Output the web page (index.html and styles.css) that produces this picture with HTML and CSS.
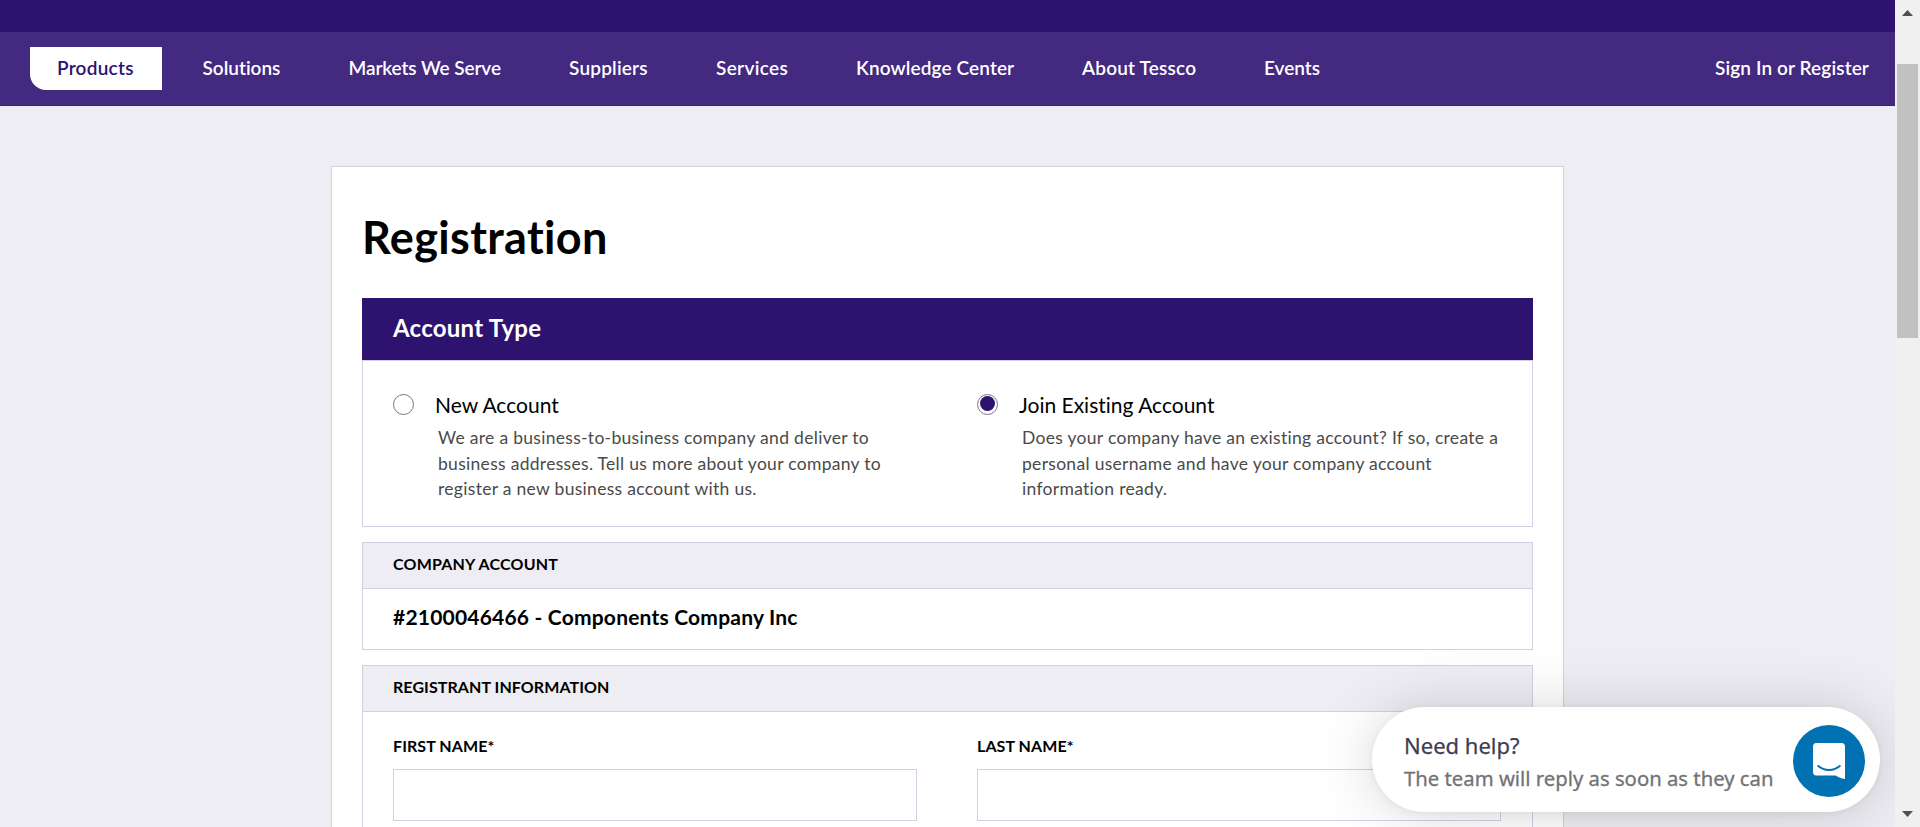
FILE: index.html
```html
<!DOCTYPE html>
<html lang="en">
<head>
<meta charset="utf-8">
<title>Registration</title>
<link rel="stylesheet" href="styles.css">
</head>
<body>
<div class="window">
  <div class="page">
    <div class="topbar"></div>
    <nav class="nav">
      <a class="nav-item active"><span class="nav-label t-products">Products</span></a>
      <a class="nav-item"><span class="nav-label t-solutions">Solutions</span></a>
      <a class="nav-item"><span class="nav-label t-markets">Markets We Serve</span></a>
      <a class="nav-item"><span class="nav-label t-suppliers">Suppliers</span></a>
      <a class="nav-item"><span class="nav-label t-services">Services</span></a>
      <a class="nav-item"><span class="nav-label t-knowledge">Knowledge Center</span></a>
      <a class="nav-item"><span class="nav-label t-about">About Tessco</span></a>
      <a class="nav-item"><span class="nav-label t-events">Events</span></a>
      <a class="signin">Sign In or Register</a>
    </nav>
    <main class="card">
      <h1 class="title">Registration</h1>
      <section class="panel">
        <h2 class="panel-banner">Account Type</h2>
        <div class="columns options">
          <div class="option">
            <span class="radio"></span>
            <div class="option-text">
              <div class="option-title">New Account</div>
              <p class="option-desc">We are a business-to-business company and deliver to<br>business addresses. Tell us more about your company to<br>register a new business account with us.</p>
            </div>
          </div>
          <div class="option">
            <span class="radio checked"></span>
            <div class="option-text">
              <div class="option-title">Join Existing Account</div>
              <p class="option-desc">Does your company have an existing account? If so, create a<br>personal username and have your company account<br>information ready.</p>
            </div>
          </div>
        </div>
      </section>
      <section class="panel">
        <h3 class="panel-head t-company">COMPANY ACCOUNT</h3>
        <div class="company">#2100046466 - Components Company Inc</div>
      </section>
      <section class="panel">
        <h3 class="panel-head">REGISTRANT INFORMATION</h3>
        <div class="columns fields">
          <label class="field"><span class="label">FIRST NAME*</span><input class="input" type="text"></label>
          <label class="field"><span class="label">LAST NAME*</span><input class="input" type="text"></label>
        </div>
      </section>
    </main>
  </div>
  <div class="scrollbar">
    <svg class="arrow" viewBox="0 0 11 6"><path d="M0 6 5.5 0 11 6Z"/></svg>
    <div class="thumb"></div>
    <svg class="arrow arrow-down" viewBox="0 0 11 6"><path d="M0 0 5.5 6 11 0Z"/></svg>
  </div>
  <aside class="help">
    <div class="help-text">
      <div class="help-title">Need help?</div>
      <div class="help-sub">The team will reply as soon as they can</div>
    </div>
    <div class="help-button">
      <svg class="help-icon" viewBox="0 0 32 36"><path fill="#fff" d="M3.5 0h25A3.5 3.5 0 0 1 32 3.5V36c-3.500-.6-6.500-2-9.500-3.600h-19A3.500 3.500 0 0 1 0 28.900V3.500A3.500 3.500 0 0 1 3.500 0Z"/><path fill="none" stroke="#0071b2" stroke-width="2" stroke-linecap="round" d="M5.200 23c6 5.200 15.600 5.200 21.600 0"/></svg>
    </div>
  </aside>
</div>
</body>
</html>
```
FILE: styles.css
```css
* { box-sizing: border-box; }
body { margin: 0; font-family: Lato, "Open Sans", sans-serif; font-variant-ligatures: none; color: #000; overflow: hidden; }
h1, h2, h3, p { margin: 0; }
.window { display: flex; height: 827px; position: relative; overflow: hidden; }
.page { flex: 1; background: #eeedf3; overflow: hidden; }
.topbar { height: 32px; background: #2d1270; }
.nav { height: 74px; background: #43297f; border-bottom: 1px solid #3a2178; display: flex; align-items: flex-start; padding: 15px 26px 0 30px; }
.nav-item { height: 43px; line-height: 41px; padding: 0 27px; margin-right: 14px; font-size: 19px; font-weight: 600; color: #fff; white-space: nowrap; }
.nav-item.active { background: #fff; color: #2d1270; border-bottom-left-radius: 16px; }
.nav-label { display: block; }
.t-products { width: 77.5px; letter-spacing: .25px; }
.t-solutions { width: 78px; }
.t-markets { width: 152.500px; letter-spacing: -.1px; }
.t-suppliers { width: 79px; letter-spacing: .2px; }
.t-services { width: 72px; letter-spacing: .35px; }
.t-knowledge { width: 158px; letter-spacing: .12px; }
.t-about { width: 114px; letter-spacing: .2px; }
.t-events { width: 57px; }
.signin { margin-left: auto; line-height: 41px; font-size: 19px; font-weight: 600; letter-spacing: .12px; color: #fff; white-space: nowrap; }
.card { width: 1233px; height: 1200px; margin: 60px 0 0 331px; background: #fff; border: 1px solid #d2cfe3; padding: 40px 30px 0; }
.title { font-size: 45px; line-height: 60px; height: 91px; font-weight: 700; letter-spacing: .35px; white-space: nowrap; }
.panel { border: 1px solid #d2cfe3; margin-bottom: 15px; }
.panel-banner { margin: -1px -1px 0; height: 62px; line-height: 60px; padding-left: 31px; background: #2d1270; color: #fff; font-size: 24px; font-weight: 700; letter-spacing: .25px; }
.columns { display: grid; grid-template-columns: 584px 1fr; padding-left: 30px; }
.options { border-top: 1px solid #d2cfe3; height: 166px; padding-top: 33px; }
.option { display: flex; }
.radio { width: 21px; height: 21px; border: 1px solid #777; border-radius: 50%; margin-right: 21px; display: flex; align-items: flex-start; justify-content: center; padding-top: 1px; }
.radio.checked::before { content: ""; width: 15px; height: 15px; border-radius: 50%; background: #2d1270; }
.option-title { font-size: 21px; line-height: 24px; margin: -1px 0 0; white-space: nowrap; }
.option-desc { font-size: 17.5px; line-height: 25.5px; letter-spacing: .3px; color: #4a4a4a; padding: 8px 0 0 3px; white-space: nowrap; }
.panel-head { height: 46px; line-height: 42px; padding-left: 30px; font-size: 16px; font-weight: 700; letter-spacing: .08px; background: #eeedf3; border-bottom: 1px solid #d2cfe3; }
.t-company { letter-spacing: .2px; }
.company { height: 60px; line-height: 56px; padding-left: 30px; font-size: 21px; font-weight: 700; letter-spacing: .2px; }
.fields { padding-top: 24px; height: 300px; align-content: start; }
.label { display: block; height: 33px; line-height: 20px; font-size: 16px; font-weight: 700; letter-spacing: .08px; }
.input { display: block; width: 524px; height: 52px; border: 1px solid #d2cfe3; background: #fff; padding: 0 15px; }
.scrollbar { position: relative; z-index: 2; width: 25px; background: #f0f0f0; display: flex; flex-direction: column; align-items: center; padding: 10px 0; }
.arrow { width: 11px; height: 6px; fill: #505050; }
.thumb { width: 21px; height: 274px; margin-top: 48px; background: #c1c1c1; }
.arrow-down { margin-top: auto; }
.help { position: absolute; left: 1372px; top: 707px; width: 508px; height: 105px; border-radius: 53px; background: #fff; box-shadow: 0 2px 60px rgba(0,0,0,.16), 0 1px 8px rgba(0,0,0,.06); display: flex; align-items: center; justify-content: space-between; padding: 3px 15px 0 32px; font-family: "Noto Sans", sans-serif; }
.help-title { font-size: 22px; line-height: 32px; margin-top: 1px; color: #3f3d52; white-space: nowrap; -webkit-text-stroke: .25px #3f3d52; }
.help-sub { font-size: 20.3px; line-height: 34px; color: #737376; white-space: nowrap; -webkit-text-stroke: .3px #737376; }
.help-button { width: 72px; height: 72px; border-radius: 50%; background: #0071b2; display: flex; align-items: center; justify-content: center; }
.help-icon { width: 32px; height: 36px; }
```
